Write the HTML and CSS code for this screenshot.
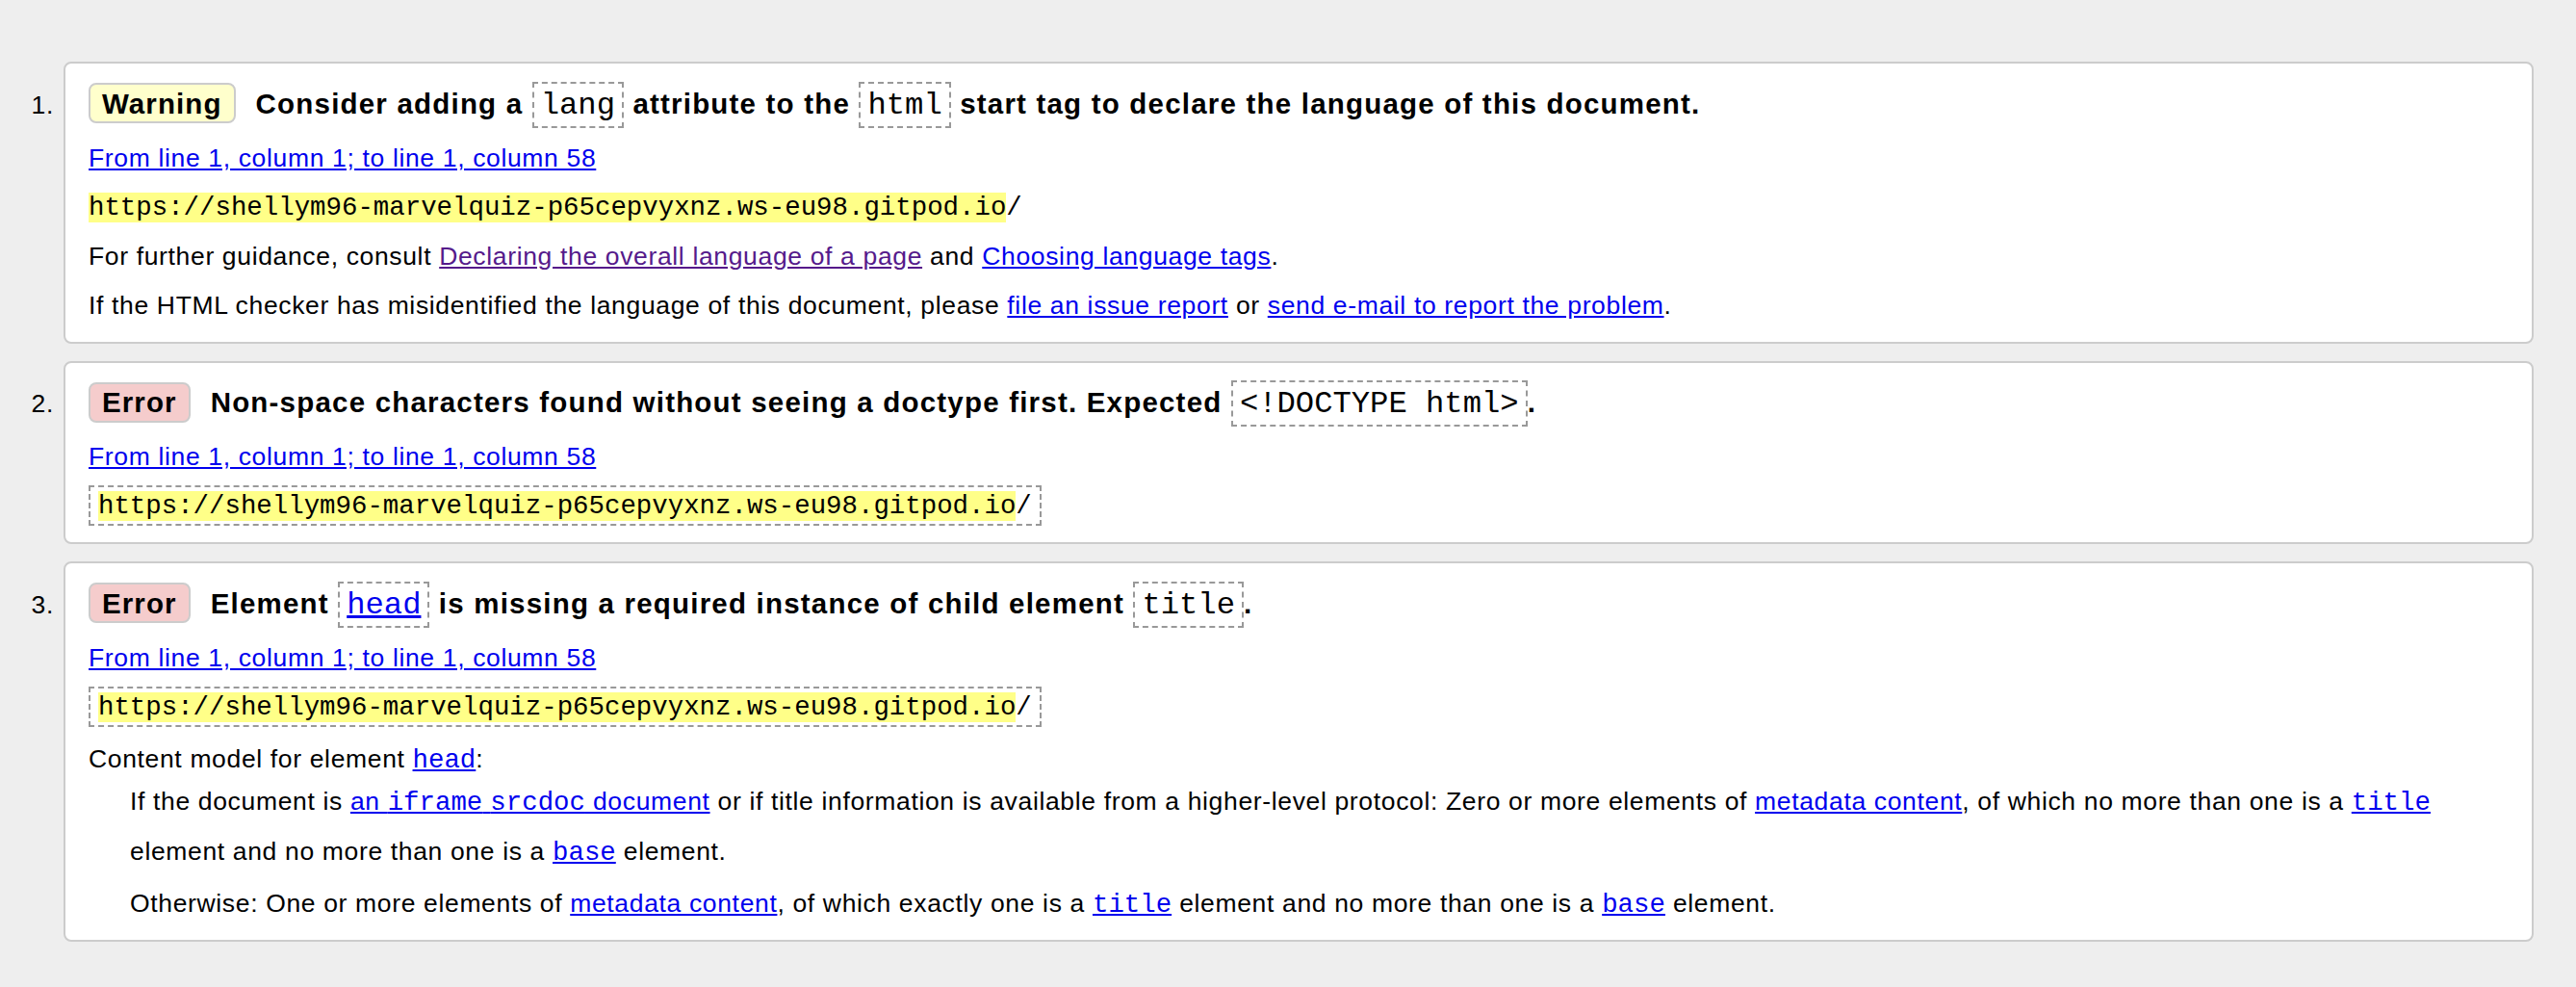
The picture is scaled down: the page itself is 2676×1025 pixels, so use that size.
FILE: index.html
```html
<!DOCTYPE html>
<html lang="en">
<head>
<meta charset="utf-8">
<title>Validator messages</title>
<link rel="stylesheet" href="styles.css">
</head>
<body>
<ol class="messages">
  <li class="item">
    <span class="num">1.</span>
    <div class="card warning">
      <p class="msg"><strong class="badge">Warning</strong><span>Consider adding a <code class="hcode">lang</code> attribute to the <code class="hcode">html</code> start tag to declare the language of this document.</span></p>
      <p class="loc"><a href="#">From line 1, column 1; to line 1, column 58</a></p>
      <p class="extract"><mark>https://shellym96-marvelquiz-p65cepvyxnz.ws-eu98.gitpod.io</mark>/</p>
      <p>For further guidance, consult <a class="visited" href="#">Declaring the overall language of a page</a> and <a href="#">Choosing language tags</a>.</p>
      <p>If the HTML checker has misidentified the language of this document, please <a href="#">file an issue report</a> or <a href="#">send e-mail to report the problem</a>.</p>
    </div>
  </li>
  <li class="item">
    <span class="num">2.</span>
    <div class="card error">
      <p class="msg"><strong class="badge">Error</strong><span>Non-space characters found without seeing a doctype first. Expected <code class="hcode">&lt;!DOCTYPE html&gt;</code>.</span></p>
      <p class="loc"><a href="#">From line 1, column 1; to line 1, column 58</a></p>
      <p class="extract"><code class="box"><mark>https://shellym96-marvelquiz-p65cepvyxnz.ws-eu98.gitpod.io</mark>/</code></p>
    </div>
  </li>
  <li class="item">
    <span class="num">3.</span>
    <div class="card error">
      <p class="msg"><strong class="badge">Error</strong><span>Element <code class="hcode"><a href="#">head</a></code> is missing a required instance of child element <code class="hcode">title</code>.</span></p>
      <p class="loc"><a href="#">From line 1, column 1; to line 1, column 58</a></p>
      <p class="extract"><code class="box"><mark>https://shellym96-marvelquiz-p65cepvyxnz.ws-eu98.gitpod.io</mark>/</code></p>
      <dl class="model">
        <dt>Content model for element <a href="#"><code>head</code></a>:</dt>
        <dd>
          <p>If the document is <a href="#">an <code>iframe</code> <code>srcdoc</code> document</a> or if title information is available from a higher-level protocol: Zero or more elements of <a href="#">metadata content</a>, of which no more than one is a <a href="#"><code>title</code></a> element and no more than one is a <a href="#"><code>base</code></a> element.</p>
          <p>Otherwise: One or more elements of <a href="#">metadata content</a>, of which exactly one is a <a href="#"><code>title</code></a> element and no more than one is a <a href="#"><code>base</code></a> element.</p>
        </dd>
      </dl>
    </div>
  </li>
</ol>
</body>
</html>
```

FILE: styles.css
```css
html, body {
  margin: 0;
  padding: 0;
}

body {
  background: #eee;
  color: #000;
  font-family: "Liberation Sans", Arial, Helvetica, sans-serif;
  font-size: 26.5px;
  letter-spacing: 0.65px;
}

a {
  color: #0000ee;
  text-decoration: underline;
}

a.visited {
  color: #551a8b;
}

.messages {
  list-style: none;
  margin: 0;
  padding: 64px 44px 40px 0;
  display: flex;
  flex-direction: column;
  gap: 18px;
}

.item {
  display: flex;
  align-items: baseline;
}

.num {
  flex: 0 0 66px;
  box-sizing: border-box;
  padding-right: 10px;
  text-align: right;
  line-height: 43px;
}

.card {
  flex: 1;
  min-width: 0;
  background: #fff;
  border: 2px solid #ccc;
  border-radius: 8px;
  padding: 20px 24px 16px;
}

.card p {
  margin: 0;
  line-height: 43px;
}

.card > p + p {
  margin-top: 8px;
}

.card > .msg {
  margin: 0 0 14px;
  line-height: 42px;
  font-size: 29.5px;
  font-weight: bold;
  letter-spacing: 1.2px;
}

.badge {
  display: inline-block;
  line-height: 33px;
  padding: 2.5px 12px;
  border: 2px solid #ccc;
  border-radius: 8px;
  margin-right: 21px;
  letter-spacing: 1.1px;
}

.warning .badge {
  background: #ffffcc;
}

.error .badge {
  background: #f5cccc;
}

code {
  font-family: "Liberation Mono", "Courier New", monospace;
  font-size: 27.4px;
  font-weight: normal;
  letter-spacing: 0;
  line-height: 1;
}

.hcode {
  font-size: 32.2px;
  border: 2px dashed #999;
  padding: 4px 7px 3px;
}

.extract {
  font-family: "Liberation Mono", "Courier New", monospace;
  font-size: 27.4px;
  letter-spacing: 0;
}

.box {
  border: 2px dashed #999;
  padding: 4px 8px 3px;
}

mark {
  background: #ffff88;
  color: inherit;
}

.card > .model {
  margin: 14px 0 0;
}

.model dt {
  line-height: 36px;
}

.model dd {
  margin: 0 0 0 43px;
}

.model dd p {
  margin: 0;
  line-height: 43px;
}

.model dd p:first-child {
  line-height: 52px;
}

.model dd p + p {
  margin-top: 7.5px;
}
```
